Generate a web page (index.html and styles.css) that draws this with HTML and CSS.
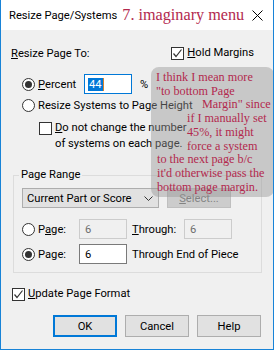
FILE: index.html
```html
<!DOCTYPE html>
<html lang="en">
<head>
    <meta charset="UTF-8">
    <title>Resize Page/Systems</title>
    <link rel="stylesheet" href="styles.css">
</head>
<body>
    <div class="window">
        <div class="titlebar">
            <span class="title">Resize Page/Systems</span>
            <span class="note-title">7. imaginary menu</span>
            <svg class="close" width="11" height="11" viewBox="0 0 11 11">
                <path d="M0.5 0.5 L10.5 10.5 M10.5 0.5 L0.5 10.5" stroke="#000" stroke-width="1" fill="none"/>
            </svg>
        </div>

        <div class="content">
            <div class="row head">
                <span><u>R</u>esize Page To:</span>
                <span class="hold">
                    <span class="box"><svg width="11" height="11" viewBox="0 0 11 11"><path d="M1.5 5.5 L4 8.5 L9.5 1.5" stroke="#333" stroke-width="1.2" fill="none"/></svg></span>
                    <span class="box-label"><u>H</u>old Margins</span>
                </span>
            </div>

            <div class="row percent indent">
                <span class="radio on"></span>
                <span class="radio-label wide"><u>P</u>ercent</span>
                <span class="field focus"><span class="sel">44</span><span class="caret"></span></span>
                <span class="unit">%</span>
            </div>

            <div class="row fit indent">
                <span class="radio"></span>
                <span class="radio-label">Resize Systems to Page Height</span>
            </div>

            <div class="keep">
                <span class="box"></span>
                <span class="box-label"><u>D</u>o not change the number<br>of systems on each page.</span>
            </div>

            <fieldset class="group">
                <legend>Page Range</legend>
                <div class="row">
                    <span class="dropdown">
                        Current Part or Score
                        <svg width="9" height="5" viewBox="0 0 9 5"><path d="M0.5 0.5 L4.5 4.5 L8.5 0.5" stroke="#333" fill="none"/></svg>
                    </span>
                    <span class="button disabled"><u>S</u>elect...</span>
                </div>
                <div class="row page first">
                    <span class="radio"></span>
                    <span class="radio-label page-label">P<u>a</u>ge:</span>
                    <span class="field disabled">6</span>
                    <span class="through"><u>T</u>hrough:</span>
                    <span class="field disabled">6</span>
                </div>
                <div class="row page">
                    <span class="radio on"></span>
                    <span class="radio-label page-label">Pa<u>g</u>e:</span>
                    <span class="field">6</span>
                    <span class="through">Through End of Piece</span>
                </div>
            </fieldset>

            <div class="row update">
                <span class="box"><svg width="11" height="11" viewBox="0 0 11 11"><path d="M1.5 5.5 L4 8.5 L9.5 1.5" stroke="#333" stroke-width="1.2" fill="none"/></svg></span>
                <span class="box-label"><u>U</u>pdate Page Format</span>
            </div>

            <div class="row buttons">
                <span class="button default">OK</span>
                <span class="button">Cancel</span>
                <span class="button">Help</span>
            </div>
        </div>

        <!-- annotation laid over the dialog -->
        <div class="note">
            <div class="l1">I think I mean more</div>
            <div class="l1">"to bottom Page</div>
            <div class="l2">Margin" since</div>
            <div class="l3">if I manually set</div>
            <div class="l3">45%, it might</div>
            <div class="l3">force a system</div>
            <div class="l4">to the next page b/c</div>
            <div class="l4">it'd otherwise pass the</div>
            <div class="l4">bottom page margin.</div>
        </div>
    </div>
</body>
</html>
```

FILE: styles.css
```css
* {
    box-sizing: border-box;
}

body {
    margin: 0;
    font-family: Roboto, "Noto Sans", sans-serif;
    font-size: 11.2px;
    color: #000;
}

.window {
    position: relative;
    width: 274px;
    height: 350px;
    background-color: #f0f0f0;
    border: 1px solid #1883d7;
    border-top: none;
    overflow: hidden;
    white-space: nowrap;
}

.titlebar {
    height: 30px;
    background-color: #fff;
    display: flex;
    align-items: center;
    padding: 0 10px 0 8px;
}

.note-title {
    font-family: "Liberation Serif", serif;
    font-size: 16.2px;
    color: #b3294e;
    margin-left: 5px;
}

.close {
    margin-left: auto;
}

.content {
    padding: 15px 11px 0 10px;
}

.row {
    display: flex;
    align-items: center;
}

.indent {
    padding-left: 11px;
}

.head {
    height: 16px;
    justify-content: space-between;
}

.hold {
    display: flex;
    align-items: center;
    margin-right: 8px;
}

.box {
    width: 13px;
    height: 13px;
    border: 1px solid #333;
    background-color: #fff;
    flex-shrink: 0;
}

.box svg {
    display: block;
}

.box-label {
    margin-left: 3px;
    line-height: 16px;
}

.radio {
    width: 13px;
    height: 13px;
    border: 1px solid #333;
    border-radius: 50%;
    background-color: #fff;
    flex-shrink: 0;
    display: flex;
    align-items: center;
    justify-content: center;
}

.radio.on::after {
    content: "";
    width: 7px;
    height: 7px;
    border-radius: 50%;
    background-color: #333;
}

.radio-label {
    margin-left: 3px;
}

.wide {
    width: 46px;
}

.percent {
    margin-top: 13px;
    height: 20px;
}

.field {
    width: 48px;
    height: 20px;
    border: 1px solid #7a7a7a;
    background-color: #fff;
    padding-left: 5px;
    display: flex;
    align-items: center;
    flex-shrink: 0;
}

.field.focus {
    border-color: #0078d7;
    padding-left: 3px;
}

.field.disabled {
    border-color: #cccccc;
    background-color: #f0f0f0;
    color: #6d6d6d;
}

.sel {
    background-color: #0078d7;
    color: #fff;
    padding: 0 1px;
    line-height: 13px;
}

.caret {
    width: 1px;
    height: 13px;
    background-color: #d9822b;
}

.unit {
    margin-left: 8px;
}

.fit {
    margin-top: 3px;
    height: 16px;
}

.keep {
    display: flex;
    align-items: flex-start;
    margin-top: 7px;
    padding-left: 28px;
}

.keep .box {
    margin-top: 2px;
}

.group {
    margin: 15px 0 0 2px;
    padding: 5px 8px 8px 8px;
    border: 1px solid #dcdcdc;
    min-width: 0;
}

.group legend {
    padding: 0 2px;
    margin-left: -3px;
    line-height: 16px;
}

.dropdown {
    width: 137px;
    height: 20px;
    background-color: #e1e1e1;
    border: 1px solid #adadad;
    display: flex;
    align-items: center;
    justify-content: space-between;
    padding: 0 5px 0 4px;
    flex-shrink: 0;
}

.button {
    width: 64px;
    height: 22px;
    background-color: #e1e1e1;
    border: 1px solid #adadad;
    display: flex;
    align-items: center;
    justify-content: center;
    flex-shrink: 0;
}

.button.disabled {
    height: 20px;
    margin-left: 8px;
    background-color: #cccccc;
    border-color: #bfbfbf;
    color: #838383;
}

.button.default {
    border: 2px solid #0078d7;
}

.page {
    margin-top: 5px;
    height: 20px;
}

.page.first {
    margin-top: 11px;
}

.page-label {
    width: 41px;
}

.through {
    margin-left: 5px;
    width: 52px;
}

.update {
    margin-top: 13px;
    height: 16px;
    padding-left: 1px;
}

.buttons {
    margin-top: 13px;
    justify-content: flex-end;
    gap: 8px;
    padding-right: 1px;
}

.note {
    position: absolute;
    left: 150px;
    top: 67px;
    right: -1px;
    height: 130px;
    padding-top: 4px;
    border-radius: 8px;
    background-color: rgba(150, 150, 150, 0.45);
    font-family: "Liberation Serif", serif;
    font-size: 12.2px;
    line-height: 13.7px;
    color: #b3294e;
}

.l1 { margin-left: 5px; }
.l2 { margin-left: 51px; }
.l3 { margin-left: 36px; }
.l4 { margin-left: 6px; }
```
